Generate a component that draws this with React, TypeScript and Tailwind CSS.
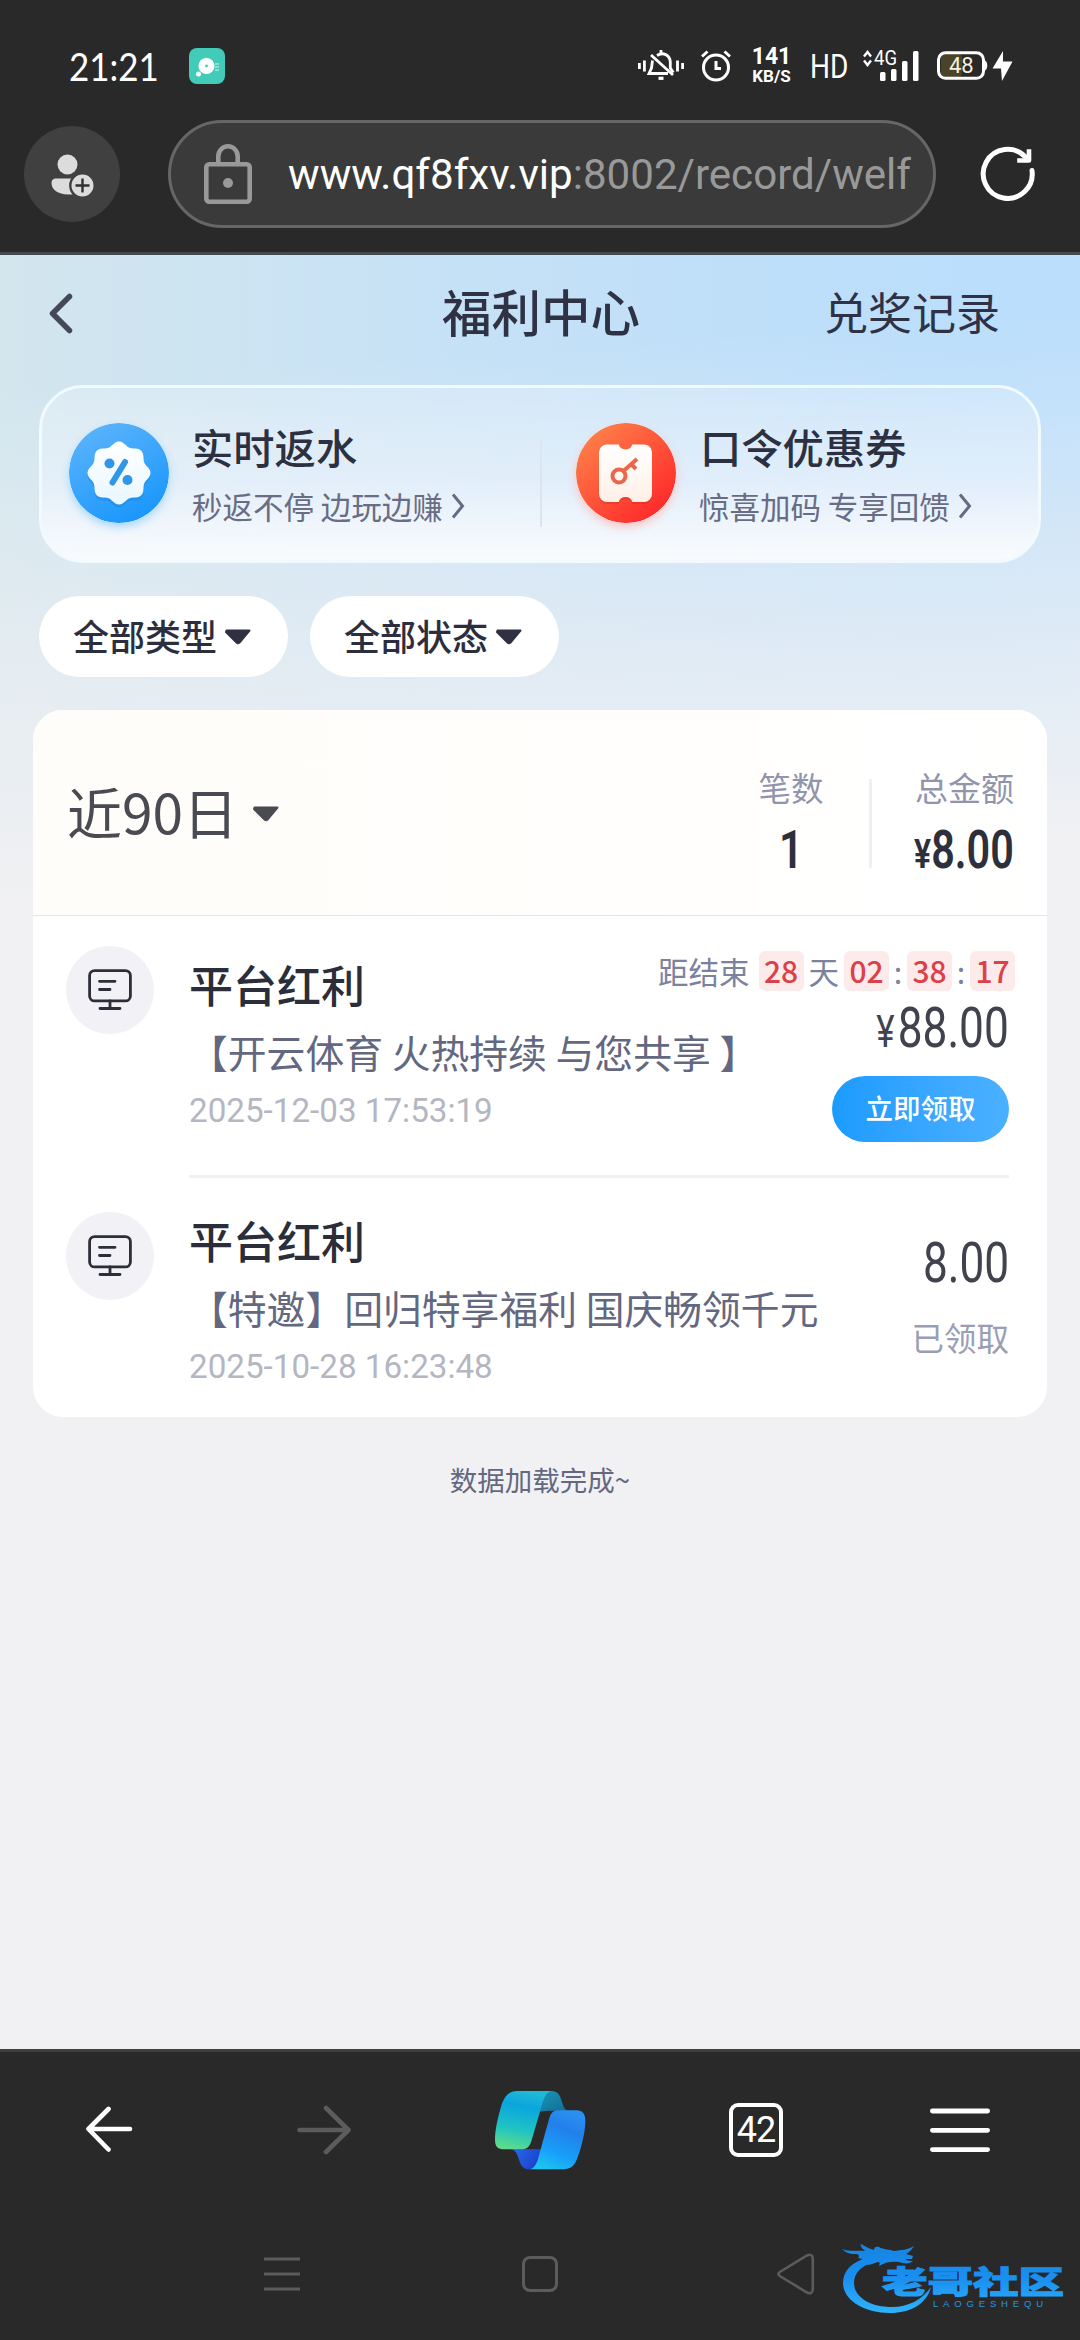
import React from "react";

interface BonusRecord {
  id: number;
  title: string;
  desc: string;
  time: string;
  amount: string;
  claimable: boolean;
}

const records: BonusRecord[] = [
  {
    id: 1,
    title: "平台红利",
    desc: "【开云体育 火热持续 与您共享 】",
    time: "2025-12-03 17:53:19",
    amount: "88.00",
    claimable: true,
  },
  {
    id: 2,
    title: "平台红利",
    desc: "【特邀】回归特享福利 国庆畅领千元",
    time: "2025-10-28 16:23:48",
    amount: "8.00",
    claimable: false,
  },
];

// Wavy outline of the percent badge
const scallopPath = () => {
  const points: string[] = [];
  for (let i = 0; i < 96; i++) {
    const angle = (i / 96) * Math.PI * 2;
    const r = 29.4 + 2.1 * Math.cos(angle * 8);
    points.push(
      `${(50 + r * Math.sin(angle)).toFixed(2)} ${(50 - r * Math.cos(angle)).toFixed(2)}`,
    );
  }
  return `M${points.join("L")}Z`;
};

const StatusBar = () => (
  <div className="flex h-[120px] items-center pt-[12px] pl-[69px] text-white">
    <span className="w-[120px] origin-left scale-x-[0.92] font-['Lato'] text-[38px] leading-none">
      21:21
    </span>
    <svg width="36" height="36" viewBox="0 0 36 36">
      <rect width="36" height="36" rx="8" fill="#42cbb8" />
      <circle cx="17.5" cy="18" r="8" fill="#fff" />
      <circle cx="17.5" cy="18" r="1.4" fill="#42cbb8" />
      <circle cx="9.5" cy="26" r="2.5" fill="#fff" />
      <path d="M27 15v8M29 15v8" stroke="#b9ece5" strokeWidth="1.2" strokeDasharray="2 1" />
    </svg>
    {/* muted bell */}
    <svg width="46" height="32" viewBox="0 0 46 32" className="ml-[413px]" fill="none" stroke="#fff" strokeWidth="2.8">
      <path d="M1.4 13v6M6.4 10.5v11M39.5 10.5v11M44.6 13v6" />
      <path d="M19 5.5c6-4 13-.5 13.3 6.5v6l3 4.5M14.5 10.5L13.5 18l-2.500 5.500h19" />
      <path d="M13 5l22 20M23 0v3.5" />
      <path d="M20.5 28.3h5" strokeWidth="3.2" />
    </svg>
    {/* alarm clock */}
    <svg width="30" height="32" viewBox="0 0 30 32" className="ml-[17px]" fill="none" stroke="#fff" strokeWidth="3">
      <circle cx="15" cy="17.5" r="12.5" />
      <path d="M15 11v7.5h5" />
      <path d="M1 6.5L6.5 1.5M29 6.5L23.5 1.5" />
    </svg>
    <div className="ml-[20px] flex w-[41px] flex-col items-center font-['Roboto'] font-bold">
      <span className="text-[23px] leading-[20px]">141</span>
      <span className="text-[17px] leading-[18px]">KB/S</span>
    </div>
    <span className="ml-[18px] w-[40px] origin-left scale-x-[0.85] font-['Roboto'] text-[33px] leading-none">
      HD
    </span>
    {/* signal */}
    <svg width="58" height="32" viewBox="0 0 58 32" className="ml-[12px] overflow-visible" fill="#fff">
      <path d="M2 6.5L5.5 2L9 6.5M2 10.5L5.5 15L9 10.5" fill="none" stroke="#fff" strokeWidth="2.4" />
      <text x="12" y="15" fontSize="20" fontFamily="Roboto" textLength="23" lengthAdjust="spacingAndGlyphs">
        4G
      </text>
      <rect x="18" y="22" width="5.5" height="9" rx="1.5" />
      <rect x="29" y="19" width="5.5" height="12" rx="1.5" />
      <rect x="40" y="11" width="5.5" height="20" rx="1.5" />
      <rect x="51" y="1" width="5.5" height="30" rx="1.5" />
    </svg>
    {/* battery */}
    <svg width="78" height="32" viewBox="0 0 78 32" className="ml-[17px]">
      <rect x="4" y="4" width="21" height="23" rx="4" fill="#4a4327" />
      <rect x="1.5" y="2.8" width="45" height="25.5" rx="7" fill="none" stroke="#fff" strokeWidth="3" />
      <path d="M48 10.5c3 1.5 3 8.5 0 10z" fill="#fff" />
      <text x="12" y="23.3" fontSize="22" fontFamily="Roboto" fill="#f5f1df">
        48
      </text>
      <path d="M66 1L55.5 18.5H64L65 31L75.5 11.5H66Z" fill="#fff" />
    </svg>
  </div>
);

const AddressBar = () => (
  <div className="flex h-[108px] items-center pl-6">
    <div className="flex size-24 items-center justify-center rounded-full bg-[#404040]">
      <svg width="44" height="44" viewBox="0 0 44 44" className="-ml-px mt-[2px]">
        <circle cx="17.5" cy="11.5" r="10" fill="#dcdcdc" />
        <path d="M6 25.5H22.5V41.5H18C8 41 1.5 37 1.5 30C1.5 27 3 25.5 6 25.5Z" fill="#dcdcdc" />
        <circle cx="32.5" cy="32.5" r="12.2" fill="#dcdcdc" stroke="#404040" strokeWidth="2.4" />
        <path d="M32.5 25.5v14M25.5 32.5h14" stroke="#303030" strokeWidth="2.4" />
      </svg>
    </div>
    <div className="ml-12 flex h-[108px] w-[768px] items-center rounded-full border-[3px] border-[#666666] bg-[#3a3a3a] pl-[33px]">
      <svg width="48" height="60" viewBox="0 0 48 60" fill="none" stroke="#999999" strokeWidth="4.6">
        <rect x="2.3" y="20.3" width="43.4" height="37.4" rx="3" />
        <path d="M14.3 20V12.5a9.7 10.2 0 0 1 19.4 0V20" />
        <circle cx="24" cy="39" r="5" fill="#999999" stroke="none" />
      </svg>
      <span className="mt-[3px] ml-[36px] whitespace-nowrap font-['Roboto'] text-[42.1px] leading-none text-white">
        www.qf8fxv.vip<span className="text-[#999999]">:8002/record/welf</span>
      </span>
    </div>
    <svg width="60" height="60" viewBox="0 0 60 60" className="ml-[42px]" fill="none" stroke="#fff" strokeWidth="5" strokeLinecap="round" strokeLinejoin="round">
      <path d="M54 26.5A24.5 24.5 0 1 1 47.5 13" />
      <path d="M51 7.5V16.5H41.5" strokeWidth="4.6" strokeLinecap="square" />
    </svg>
  </div>
);

const ChevronRight = () => (
  <svg width="14" height="26" viewBox="0 0 14 26" fill="none" stroke="#666b82" strokeWidth="3">
    <path d="M2 1.5L11.5 13L2 24.5" />
  </svg>
);

const Caret = ({ color }: { color: string }) => (
  <svg width="28" height="18" viewBox="0 0 28 18" fill={color} stroke={color} strokeWidth="2" strokeLinejoin="round">
    <path d="M2.5 2.5H25.5L15.500 14.500Q14 15.800 12.500 14.500L2 4Z" />
  </svg>
);

const PercentIcon = () => (
  <svg width="100" height="100" viewBox="0 0 100 100" className="rounded-full shadow-[0_4px_9px_#a9d8fb]">
    <defs>
      <linearGradient id="blueDisc" x1="0.2" y1="0" x2="0.7" y2="1">
        <stop offset="0" stopColor="#5cb4fb" />
        <stop offset="1" stopColor="#1896fb" />
      </linearGradient>
      <linearGradient id="badge" x1="0" y1="0" x2="0" y2="1">
        <stop offset="0" stopColor="#ffffff" />
        <stop offset="1" stopColor="#e8f7ff" />
      </linearGradient>
    </defs>
    <circle cx="50" cy="50" r="50" fill="url(#blueDisc)" />
    <path d={scallopPath()} fill="#1282de" opacity="0.35" transform="translate(0 3)" />
    <path d={scallopPath()} fill="url(#badge)" />
    <g fill="#3096e8">
      <circle cx="40.5" cy="40.5" r="5" />
      <circle cx="58.5" cy="57" r="5" />
      <path d="M56 39L43.5 59.5" stroke="#3096e8" strokeWidth="6" strokeLinecap="round" />
    </g>
  </svg>
);

const CouponIcon = () => (
  <svg width="100" height="100" viewBox="0 0 100 100" className="rounded-full shadow-[0_4px_9px_#f9c6c4]">
    <defs>
      <linearGradient id="redDisc" x1="0.1" y1="0.1" x2="0.8" y2="0.9">
        <stop offset="0" stopColor="#fe8048" />
        <stop offset="1" stopColor="#fe2c2c" />
      </linearGradient>
      <linearGradient id="ticket" x1="0" y1="0" x2="0" y2="1">
        <stop offset="0" stopColor="#ffffff" />
        <stop offset="1" stopColor="#fff0e6" />
      </linearGradient>
    </defs>
    <circle cx="50" cy="50" r="50" fill="url(#redDisc)" />
    <path d="M31 24H43a6.5 5 0 0 0 13 0H68a8 8 0 0 1 8 8V73a8 8 0 0 1-8 8H56a6.5 5 0 0 0-13 0H31a8 8 0 0 1-8-8V32a8 8 0 0 1 8-8Z" fill="#c72417" opacity="0.3" />
    <path d="M31 21.5H43a6.5 5 0 0 0 13 0H68a8 8 0 0 1 8 8V71a8 8 0 0 1-8 8H56a6.5 5 0 0 0-13 0H31a8 8 0 0 1-8-8V29.5a8 8 0 0 1 8-8Z" fill="url(#ticket)" />
    <g fill="none" stroke="#e9684b" strokeWidth="4">
      <circle cx="43" cy="53" r="6.5" />
      <path d="M47.5 48L61 36M55.5 41.5L60 46" />
    </g>
  </svg>
);

const MonitorIcon = () => (
  <svg width="44" height="42" viewBox="0 0 44 42" fill="none" stroke="#2c2e3a" strokeWidth="2.8" strokeLinecap="round">
    <rect x="1.6" y="1.6" width="40.8" height="30.3" rx="5" />
    <path d="M11.5 12.3H27M11.5 20.5H22M22 32V39M12 39.5H32" />
  </svg>
);

const PromoCard = () => (
  <div className="mx-[39px] flex h-[178px] items-start rounded-[44px] border-[3px] border-[#f2faff] bg-linear-to-b from-white/20 via-[#e9f2fc]/70 via-55% to-[#f9fbfd] pt-[35px] pl-[27px]">
    <PercentIcon />
    <div className="ml-[23px] w-[348px]">
      <p className="pt-[2px] text-[41.3px] leading-[42px] font-medium text-[#2c3040]">
        实时返水
      </p>
      <div className="mt-[20px] flex h-[38px] items-center gap-2 text-[30.5px] leading-none whitespace-nowrap text-[#686c84]">
        秒返不停 边玩边赚
        <ChevronRight />
      </div>
    </div>
    <div className="mt-[18px] h-[86px] w-[2px] bg-[#dce4ee]" />
    <div className="ml-[34px]">
      <CouponIcon />
    </div>
    <div className="ml-[23px]">
      <p className="pt-[2px] pl-px text-[41.3px] leading-[42px] font-medium text-[#2c3040]">
        口令优惠券
      </p>
      <div className="mt-[20px] flex h-[38px] items-center gap-2 text-[30.5px] leading-none whitespace-nowrap text-[#686c84]">
        惊喜加码 专享回馈
        <ChevronRight />
      </div>
    </div>
  </div>
);

const FilterChip = ({ label }: { label: string }) => (
  <button className="flex h-[81px] w-[249px] items-center rounded-full bg-white pl-[34px] text-[36px] leading-none font-medium text-[#2c2e3e]">
    <span className="-mt-[3px] mr-[7px]">{label}</span>
    <Caret color="#2f3142" />
  </button>
);

const TimeBox = ({ value }: { value: string }) => (
  <span className="flex h-10 w-[45px] items-center justify-center rounded-md bg-[#fdebeb] pb-[2px] text-[30px] font-medium text-[#dc4148]">
    {value}
  </span>
);

const Summary = () => (
  <div className="flex h-[206px] border-b border-[#e4e5ea] bg-linear-to-r from-[#fffdf9] to-white pl-[34px]">
    <div className="flex h-[206px] w-[660px] items-center text-[55px] leading-none text-[#4a4b52]">
      <span className="-mt-[5px] mr-[14px]">近90日</span>
      <div className="mt-[2px]">
        <Caret color="#4a4b52" />
      </div>
    </div>
    <div className="flex w-[129px] flex-col items-center pt-[60px]">
      <span className="mr-px text-[32.5px] leading-[34px] text-[#9095ac]">笔数</span>
      <span className="mt-[21px] scale-x-[0.8] font-['Roboto'] text-[53px] leading-[50px] font-semibold text-[#2d2f3b]">
        1
      </span>
    </div>
    <div className="mt-[69px] ml-[13px] h-[89px] w-[3px] bg-[#f0f0f3]" />
    <div className="flex w-[142px] flex-col items-end pt-[60px]">
      <span className="text-[33px] leading-[34px] text-[#9095ac]">总金额</span>
      <span className="mt-[21px] origin-right scale-x-[0.78] font-['Roboto'] text-[53px] leading-[50px] font-semibold text-[#2d2f3b]">
        <span className="text-[41px]">¥</span>8.00
      </span>
    </div>
  </div>
);

const RecordRow = ({ record }: { record: BonusRecord }) => (
  <div className="flex">
    <div
      className={
        record.claimable
          ? "mt-[30px] flex size-[88px] items-center justify-center rounded-full bg-[#f1f1f6]"
          : "mt-[34px] flex size-[88px] items-center justify-center rounded-full bg-[#f1f1f6]"
      }
    >
      <MonitorIcon />
    </div>
    <div
      className={
        record.claimable
          ? "relative ml-[35px] h-[262px] w-[820px] border-b-[3px] border-[#f1f1f4] pt-[43px]"
          : "relative ml-[35px] h-[239px] w-[820px] pt-[37px]"
      }
    >
      <p className="text-[44px] leading-[50px] font-medium text-[#2b2d38]">{record.title}</p>
      <p className="mt-[17px] text-[38.8px] leading-[50px] whitespace-nowrap text-[#636880]">
        {record.desc}
      </p>
      <p className="mt-[15px] font-['Roboto'] text-[33.2px] leading-[40px] text-[#b4b6c2]">
        {record.time}
      </p>
      {record.claimable ? (
        <div className="absolute top-[35px] -right-[6px] flex flex-col items-end">
          <div className="flex h-10 items-center text-[30.5px] leading-none text-[#7c829e]">
            <span className="mr-[9px]">距结束</span>
            <TimeBox value="28" />
            <span className="mx-[5px]">天</span>
            <TimeBox value="02" />
            <span className="w-[18px] text-center">:</span>
            <TimeBox value="38" />
            <span className="w-[18px] text-center">:</span>
            <TimeBox value="17" />
          </div>
          <div className="mt-[9px] mr-[6px] origin-right scale-x-[0.79] font-['Roboto'] text-[56px] leading-[56px] text-[#40424d]">
            <span className="mr-[4px] text-[44px]">¥</span>
            {record.amount}
          </div>
          <button className="mt-[16px] mr-[6px] flex h-[66px] w-[177px] items-center justify-center rounded-full bg-linear-to-r from-[#1a9bff] to-[#4bb0ff] pb-[2px] text-[27.500px] leading-none font-medium text-white">
            立即领取
          </button>
        </div>
      ) : (
        <div className="absolute top-[57px] right-0 flex flex-col items-end">
          <div className="origin-right scale-x-[0.79] font-['Roboto'] text-[56px] leading-[56px] text-[#40424d]">
            {record.amount}
          </div>
          <span className="mt-[28px] text-[32.5px] leading-[36px] text-[#9a9eb4]">已领取</span>
        </div>
      )}
    </div>
  </div>
);

const CopilotLogo = () => (
  <svg width="120" height="100" viewBox="0 0 360 300">
    <defs>
      <linearGradient id="ribbonLeft" x1="0.5" y1="0" x2="0.3" y2="1">
        <stop offset="0" stopColor="#1fb9d8" />
        <stop offset="0.25" stopColor="#0aa5dd" />
        <stop offset="0.65" stopColor="#1fc3c4" />
        <stop offset="1" stopColor="#5fdc88" />
      </linearGradient>
      <linearGradient id="ribbonRight" x1="0.7" y1="0" x2="0.3" y2="1">
        <stop offset="0" stopColor="#2b8ff0" />
        <stop offset="0.3" stopColor="#2380ea" />
        <stop offset="0.7" stopColor="#179ffa" />
        <stop offset="1" stopColor="#1cc4ee" />
      </linearGradient>
      <linearGradient id="foldTop" x1="0" y1="0" x2="1" y2="1">
        <stop offset="0" stopColor="#1697b5" />
        <stop offset="1" stopColor="#146a96" />
      </linearGradient>
      <linearGradient id="foldBottom" x1="0" y1="0" x2="1" y2="0.4">
        <stop offset="0" stopColor="#2a6ee8" />
        <stop offset="1" stopColor="#1b41cf" />
      </linearGradient>
    </defs>
    <path d="M172 95C184 52 190 33 214 33C236 33 241 50 247 68C251 84 256 92 270 92H206Z" fill="url(#foldTop)" />
    <path d="M92 208C109 210 112 225 118 242C124 260 132 268 150 268C172 266 176 245 186 208Z" fill="url(#foldBottom)" />
    <path d="M112 33H216C196 35 190 58 180 95L155 180C150 198 143 208 123 208H72C54 208 45 200 45 180C45 155 50 125 63 80C72 50 86 33 112 33Z" fill="url(#ribbonLeft)" />
    <path d="M237 91H290C308 91 316 103 316 122C316 155 305 200 292 235C284 257 272 268 250 268H150C168 262 172 245 180 215L207 118C212 98 220 91 237 91Z" fill="url(#ribbonRight)" />
  </svg>
);

const Watermark = () => (
  <svg width="250" height="100" viewBox="0 0 250 100" className="absolute top-[178px] left-[830px]">
    <defs>
      <linearGradient id="waterBlue" x1="0" y1="15" x2="0" y2="84" gradientUnits="userSpaceOnUse">
        <stop offset="0" stopColor="#1684e2" />
        <stop offset="0.5" stopColor="#1a90f0" />
        <stop offset="1" stopColor="#2fb4fc" />
      </linearGradient>
    </defs>
    <g fill="url(#waterBlue)">
      <path d="M36 28C22 32 13 41 13 53C13 70 34 83 60 83C80 83 97 74 101 57C92 70 78 77 62 77C40 77 24 67 24 53C24 43 31 36 44 32Z" />
      <path d="M12 19C20 22 28 20 35 21C32 18 30 16 31 14C36 17 40 19 44 20C44 17 46 16 49 17C53 20 60 19 64 21C71 20 78 20 84 16C81 21 78 23 76 24L83 26L82 29L75 29C78 31 81 31 83 31C80 34 74 34 69 32C62 31 55 32 49 36C50 33 50 32 48 32C44 33 40 35 37 35C39 33 39 31 37 30L28 28C30 26 29 24 25 24C19 24 15 22 12 19Z" />
      <text x="52" y="63" fontSize="31" fontWeight="900" fontFamily="'Noto Sans CJK SC', sans-serif" textLength="182" lengthAdjust="spacingAndGlyphs" stroke="url(#waterBlue)" strokeWidth="1">
        老哥社区
      </text>
      <text x="103" y="76.5" fontSize="9.5" fontFamily="'Liberation Sans', sans-serif" textLength="110" opacity="0.85">
        LAOGESHEQU
      </text>
    </g>
  </svg>
);

const BottomBar = () => (
  <div className="relative h-[291px] border-t-[3px] border-[#3f3f3f] bg-[#292929]">
    <div className="flex h-[156px] items-center">
      <svg width="48" height="48" viewBox="0 0 48 48" className="ml-[85px]" fill="none" stroke="#fff" strokeWidth="4.6" strokeLinecap="round" strokeLinejoin="round">
        <path d="M45 23H4M23.5 3L3.5 23L23.5 43.5" />
      </svg>
      <svg width="54" height="54" viewBox="0 0 54 54" className="ml-[164px]" fill="none" stroke="#5c5c5c" strokeWidth="4.6" strokeLinecap="round" strokeLinejoin="round">
        <path d="M2.5 27H51M29 5L51.5 27L29 49" />
      </svg>
      <div className="ml-[129px]">
        <CopilotLogo />
      </div>
      <div className="ml-[129px] flex size-[54px] items-center justify-center rounded-[9px] border-[4.5px] border-white font-['Roboto'] text-[36px] leading-none tracking-[-1px] text-white">
        42
      </div>
      <svg width="60" height="46" viewBox="0 0 60 46" className="ml-[147px]" stroke="#fff" strokeWidth="4.8" strokeLinecap="round">
        <path d="M2.4 4H57.6M2.4 23.3H57.6M2.4 42.6H57.6" />
      </svg>
    </div>
    <div className="flex h-[132px] items-center">
      <svg width="36" height="34" viewBox="0 0 36 34" className="ml-[264px]" stroke="#5c5c5c" strokeWidth="3">
        <path d="M0 2H36M0 17H36M0 32H36" />
      </svg>
      <div className="ml-[222px] size-9 rounded-[8px] border-[3px] border-[#5c5c5c]" />
      <svg width="38" height="42" viewBox="0 0 38 42" className="ml-[219px]" fill="none" stroke="#5c5c5c" strokeWidth="2.6">
        <path d="M2.8 19L30 2.5Q35.5 0 35.8 6V36Q35.5 42 30 39.5L2.8 23Q0 21 2.8 19Z" />
      </svg>
    </div>
    <Watermark />
  </div>
);

const App: React.FC = () => {
  return (
    <div className="flex h-[2340px] w-[1080px] flex-col overflow-hidden bg-[#f1f1f3] font-['Noto_Sans_CJK_SC',sans-serif]">
      <header className="h-[255px] border-b-[3px] border-[#444b50] bg-[#292929]">
        <StatusBar />
        <AddressBar />
      </header>

      <main className="flex-1 bg-linear-to-r from-[#d3e6ee] via-[#c5e1f6] via-45% to-[#badefc] to-90%">
        <div className="h-full bg-[linear-gradient(176deg,#f1f1f300_0px,#f1f1f300_130px,#f1f1f399_420px,#f1f1f3_660px)]">
          <div className="flex h-[130px] items-center">
            <svg width="24" height="42" viewBox="0 0 24 42" className="-mt-[12px] ml-[49px]" fill="none" stroke="#454858" strokeWidth="5.5" strokeLinecap="round" strokeLinejoin="round">
              <path d="M20.5 3.5L3.5 20.5L20.5 37.5" />
            </svg>
            <h1 className="-mt-[19px] ml-[369px] w-[382px] text-[49.5px] leading-none font-medium text-[#2e3244]">
              福利中心
            </h1>
            <span className="-mt-[19px] text-[44px] leading-none text-[#2e3244]">兑奖记录</span>
          </div>

          <PromoCard />

          <div className="mt-[33px] ml-[39px] flex gap-[22px]">
            <FilterChip label="全部类型" />
            <FilterChip label="全部状态" />
          </div>

          <section className="mx-[33px] mt-[33px] h-[707px] overflow-hidden rounded-[30px] bg-white">
            <Summary />
            <div className="pl-[33px]">
              {records.map((record) => (
                <RecordRow key={record.id} record={record} />
              ))}
            </div>
          </section>

          <p className="mt-[46px] text-center text-[27.5px] leading-[32px] text-[#636880]">
            数据加载完成~
          </p>
        </div>
      </main>

      <BottomBar />
    </div>
  );
};

export default App;
